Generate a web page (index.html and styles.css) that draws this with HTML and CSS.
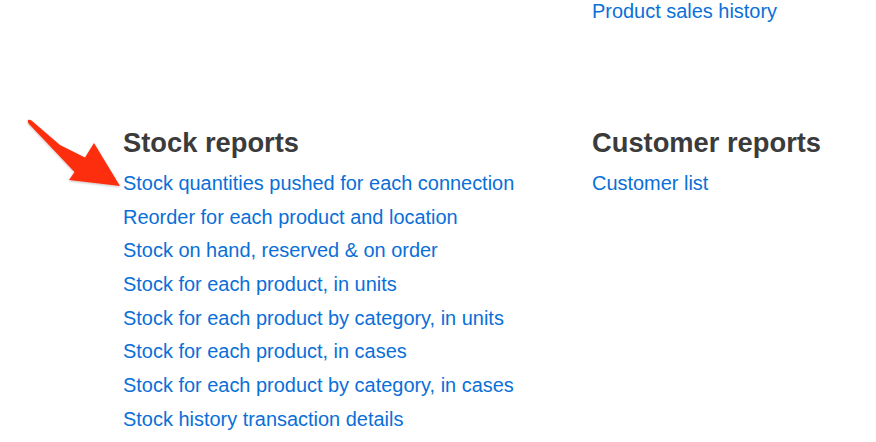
FILE: index.html
```html
<!DOCTYPE html>
<html lang="en">
<head>
<meta charset="utf-8">
<title>Reports</title>
<link rel="stylesheet" href="styles.css">
</head>
<body>
<div class="page">
  <div class="row">
    <section class="col"></section>
    <section class="col">
      <ul class="links">
        <li><a href="#">Product sales history</a></li>
      </ul>
    </section>
  </div>
  <div class="row row-main">
    <section class="col">
      <h2 class="heading">Stock reports</h2>
      <ul class="links">
        <li><a href="#">Stock quantities pushed for each connection</a></li>
        <li><a href="#">Reorder for each product and location</a></li>
        <li><a href="#">Stock on hand, reserved &amp; on order</a></li>
        <li><a href="#">Stock for each product, in units</a></li>
        <li><a href="#">Stock for each product by category, in units</a></li>
        <li><a href="#">Stock for each product, in cases</a></li>
        <li><a href="#">Stock for each product by category, in cases</a></li>
        <li><a href="#">Stock history transaction details</a></li>
      </ul>
    </section>
    <section class="col">
      <h2 class="heading">Customer reports</h2>
      <ul class="links">
        <li><a href="#">Customer list</a></li>
      </ul>
    </section>
  </div>
</div>
<svg class="annotation" width="130" height="200" viewBox="0 0 130 200" aria-hidden="true">
  <defs>
    <filter id="sh" x="-20%" y="-20%" width="140%" height="140%">
      <feDropShadow dx="0" dy="1" stdDeviation="1" flood-color="#000" flood-opacity="0.25"/>
    </filter>
  </defs>
  <path filter="url(#sh)" fill="#fd2f10" d="M28.5 119.8 C29.5 119.5 30.5 120 31.5 120.6 L60 145 L85 157.5 L94 143 L120 186 L69 180 L74.5 172 L29 124 C27.5 122.8 27.5 120.3 28.5 119.8 Z"/>
</svg>
</body>
</html>
```
FILE: styles.css
```css
html, body {
  margin: 0;
  padding: 0;
  background: #ffffff;
}

body {
  width: 876px;
  height: 442px;
  overflow: hidden;
  position: relative;
  font-family: "Liberation Sans", Arial, Helvetica, sans-serif;
}

.page {
  margin-top: -5.2px;
}

.row {
  display: grid;
  grid-template-columns: 469px 1fr;
  padding-left: 123px;
}

.row-main {
  margin-top: 97.3px;
}

.heading {
  margin: 0 0 7px 0;
  font-size: 27.3px;
  line-height: 34px;
  font-weight: bold;
  color: #3b3b3b;
}

.links {
  list-style: none;
  margin: 0;
  padding: 0;
}

.links li {
  font-size: 19.95px;
  line-height: 33.7px;
  white-space: nowrap;
}

.links a {
  color: #0a6fd8;
  text-decoration: none;
}

.annotation {
  position: absolute;
  left: 0;
  top: 0;
}
```
